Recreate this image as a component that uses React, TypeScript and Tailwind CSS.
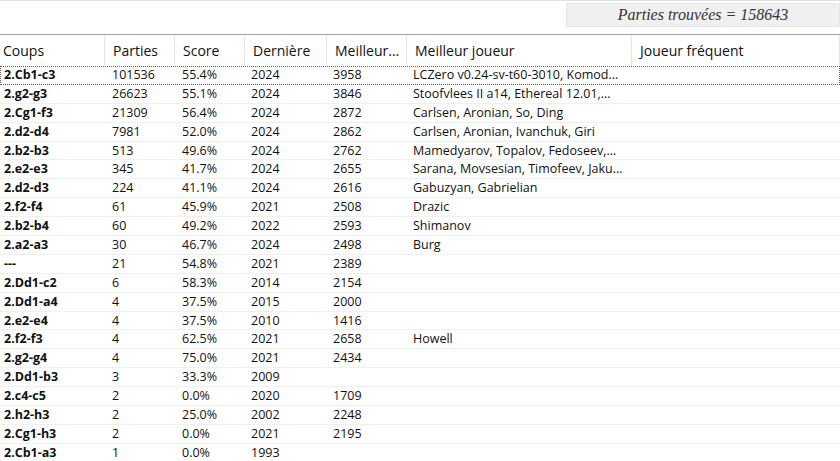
import React from "react";

const rows: string[][] = [
  ["2.Cb1-c3", "101536", "55.4%", "2024", "3958", "LCZero v0.24-sv-t60-3010, Komod…"],
  ["2.g2-g3", "26623", "55.1%", "2024", "3846", "Stoofvlees II a14, Ethereal 12.01,…"],
  ["2.Cg1-f3", "21309", "56.4%", "2024", "2872", "Carlsen, Aronian, So, Ding"],
  ["2.d2-d4", "7981", "52.0%", "2024", "2862", "Carlsen, Aronian, Ivanchuk, Giri"],
  ["2.b2-b3", "513", "49.6%", "2024", "2762", "Mamedyarov, Topalov, Fedoseev,…"],
  ["2.e2-e3", "345", "41.7%", "2024", "2655", "Sarana, Movsesian, Timofeev, Jaku…"],
  ["2.d2-d3", "224", "41.1%", "2024", "2616", "Gabuzyan, Gabrielian"],
  ["2.f2-f4", "61", "45.9%", "2021", "2508", "Drazic"],
  ["2.b2-b4", "60", "49.2%", "2022", "2593", "Shimanov"],
  ["2.a2-a3", "30", "46.7%", "2024", "2498", "Burg"],
  ["---", "21", "54.8%", "2021", "2389", ""],
  ["2.Dd1-c2", "6", "58.3%", "2014", "2154", ""],
  ["2.Dd1-a4", "4", "37.5%", "2015", "2000", ""],
  ["2.e2-e4", "4", "37.5%", "2010", "1416", ""],
  ["2.f2-f3", "4", "62.5%", "2021", "2658", "Howell"],
  ["2.g2-g4", "4", "75.0%", "2021", "2434", ""],
  ["2.Dd1-b3", "3", "33.3%", "2009", "", ""],
  ["2.c4-c5", "2", "0.0%", "2020", "1709", ""],
  ["2.h2-h3", "2", "25.0%", "2002", "2248", ""],
  ["2.Cg1-h3", "2", "0.0%", "2021", "2195", ""],
  ["2.Cb1-a3", "1", "0.0%", "1993", "", ""],
];

const headers = ["Coups", "Parties", "Score", "Dernière", "Meilleur...", "Meilleur joueur", "Joueur fréquent"];

const cols = "grid grid-cols-[105px_70px_70px_82px_80px_225px_1fr]";

const App = () => {
  return (
    <div className="w-[840px] h-[461px] overflow-hidden bg-white text-[#111] font-['Open_Sans',sans-serif]">
      <div className="h-[35px] border-t border-[#e3e3e3] border-b border-b-[#a0a0a0] flex justify-end pt-[2px]">
        <div className="w-[274px] h-[24px] bg-[#f0f0f0] border border-[#e6e6e6] flex items-center justify-center font-['Liberation_Serif',serif] italic text-[16px] text-[#333]">
          Parties trouvées = 158643
        </div>
      </div>

      <div className={`${cols} h-[31px] text-[14px]`}>
        {headers.map((h, i) => (
          <div
            key={h}
            className={`flex items-center border-r border-[#e5e5e5] whitespace-nowrap overflow-hidden ${i === 0 ? "pl-[3px]" : "pl-[8px]"}`}
          >
            {h}
          </div>
        ))}
      </div>

      <div className="text-[12.5px]">
        {rows.map((r, idx) => (
          <div
            key={idx}
            className={`${cols} h-[18.9px] items-center border-b border-[#f0f0f0] ${idx === 0 ? "outline outline-1 outline-dotted outline-[#666] -outline-offset-1" : ""}`}
          >
            <div className="pl-[4px] font-bold whitespace-nowrap">{r[0]}</div>
            <div className="pl-[7px]">{r[1]}</div>
            <div className="pl-[7px]">{r[2]}</div>
            <div className="pl-[6px]">{r[3]}</div>
            <div className="pl-[6px]">{r[4]}</div>
            <div className="pl-[6px] whitespace-nowrap overflow-hidden">{r[5]}</div>
            <div></div>
          </div>
        ))}
      </div>
    </div>
  );
};

export default App;
